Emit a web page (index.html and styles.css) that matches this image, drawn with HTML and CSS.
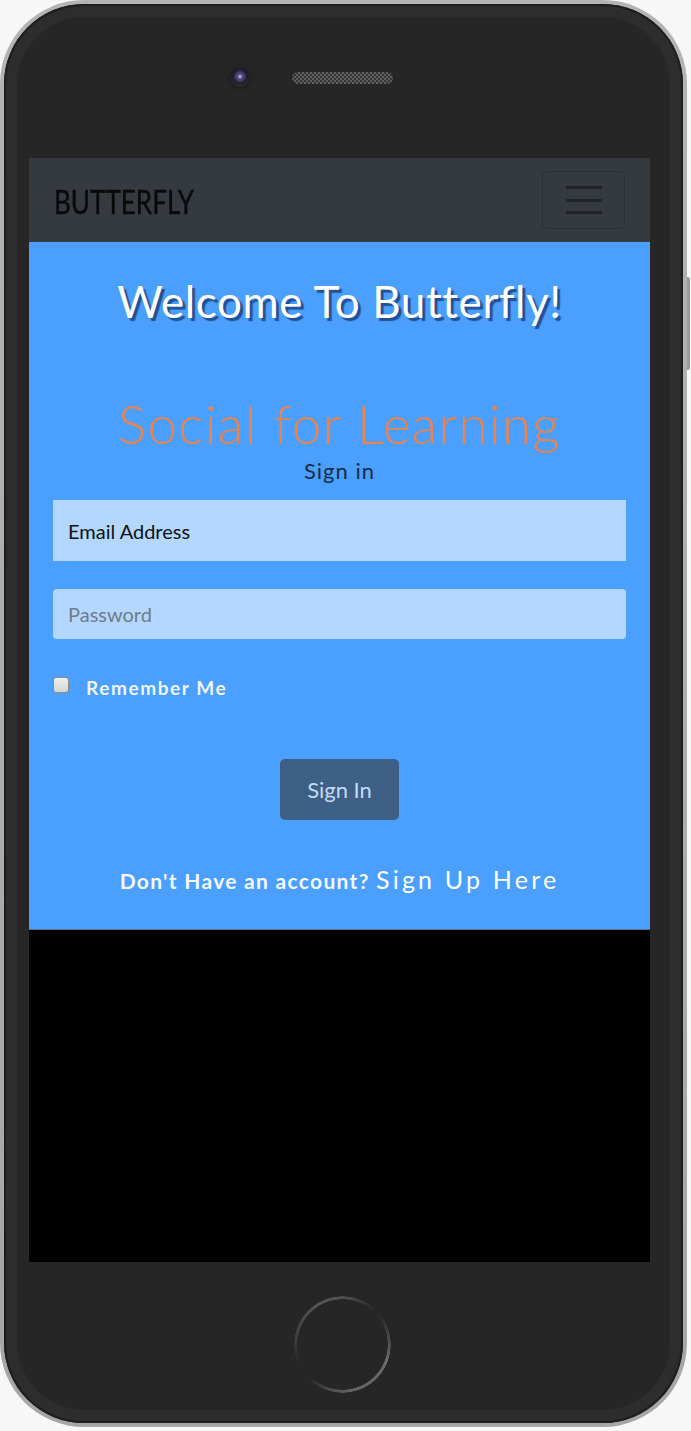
FILE: index.html
```html
<!DOCTYPE html>
<html lang="en">
<head>
<meta charset="utf-8">
<title>Butterfly</title>
<link rel="stylesheet" href="styles.css">
</head>
<body>
<div class="phone">
  <span class="side-btn"></span>
  <div class="shell">
    <div class="face">
      <div class="top">
        <span class="camera"></span>
        <span class="speaker"></span>
      </div>
      <div class="screen">
        <nav class="navbar">
          <span class="brand">BUTTERFLY</span>
          <button class="toggler" type="button" aria-label="menu">
            <span class="bar"></span><span class="bar"></span><span class="bar"></span>
          </button>
        </nav>
        <main class="main">
          <h1 class="welcome">Welcome To Butterfly!</h1>
          <h2 class="tagline">Social for Learning</h2>
          <p class="signin-title">Sign in</p>
          <form class="form">
            <input class="input input-email" type="text" value="Email Address">
            <input class="input input-pass" type="password" placeholder="Password">
            <label class="remember"><span class="check"></span><span>Remember Me</span></label>
            <div class="btn-row"><button class="btn" type="button">Sign In</button></div>
            <p class="signup">Don't Have an account? <a class="signup-link">Sign Up Here</a></p>
          </form>
        </main>
        <div class="blank"></div>
      </div>
      <div class="bottom">
        <span class="home"></span>
      </div>
    </div>
  </div>
</div>
</body>
</html>
```
FILE: styles.css
```css
html, body {
  margin: 0;
  padding: 0;
}
body {
  background: #f7f7f7;
  width: 691px;
  height: 1431px;
  overflow: hidden;
  font-family: Lato, "Open Sans", sans-serif;
}
.phone {
  position: relative;
  width: 687px;
  height: 1427px;
  box-sizing: border-box;
  padding: 4px;
  border-radius: 84px;
  background: linear-gradient(180deg, #b4b4b4, #a6a6a6);
}
.side-btn {
  position: absolute;
  left: 687px;
  top: 277px;
  width: 3px;
  height: 93px;
  background: #9c9c9c;
  border-radius: 0 2px 2px 0;
}
.shell {
  height: 100%;
  box-sizing: border-box;
  padding: 13px;
  border-radius: 80px;
  background: #2d2d2d;
  box-shadow: inset 0 0 0 2px #1e1e1e;
}
.face {
  height: 100%;
  box-sizing: border-box;
  padding: 0 20px 0 12px;
  border-radius: 68px;
  background: #262626;
  display: flex;
  flex-direction: column;
}
.top {
  height: 141px;
  flex: none;
  box-sizing: border-box;
  padding: 0 0 19px 202px;
  display: flex;
  align-items: center;
  gap: 43px;
}
.camera {
  width: 18px;
  height: 18px;
  border-radius: 50%;
  background: radial-gradient(circle at 50% 42%, #b0a8d8 0 1px, #5e5590 2px, #3a3458 5px, #1c1b26 7px, #2a2a2e 9px);
  box-shadow: 0 0 3px 2px #1f1f1f;
}
.speaker {
  width: 101px;
  height: 12px;
  border-radius: 6px;
  background-color: #3a3a3a;
  background-image: repeating-conic-gradient(#5e5e5e 0 25%, #353535 0 50%);
  background-size: 4px 4px;
}
.screen {
  flex: none;
  height: 1104px;
  display: flex;
  flex-direction: column;
  background: #000;
}
.navbar {
  flex: none;
  height: 84px;
  box-sizing: border-box;
  padding: 0 25px;
  background: #343a40;
  display: flex;
  align-items: center;
  justify-content: space-between;
}
.brand {
  display: inline-block;
  font-family: Lato, "Open Sans", sans-serif;
  font-size: 33px;
  line-height: 40px;
  color: #0a0a0a;
  transform: scaleX(0.79);
  transform-origin: left center;
  margin-top: 2px;
  -webkit-text-stroke: 0.4px #0a0a0a;
}
.toggler {
  width: 83px;
  height: 58px;
  box-sizing: border-box;
  border: 1px solid rgba(0, 0, 0, 0.16);
  border-radius: 5px;
  background: transparent;
  padding: 0;
  display: flex;
  flex-direction: column;
  align-items: center;
  justify-content: center;
  gap: 9.5px;
}
.bar {
  display: block;
  width: 36px;
  height: 3px;
  background: #1f2327;
  border-radius: 1px;
}
.main {
  flex: none;
  height: 688px;
  box-sizing: border-box;
  padding: 34px 24px 0;
  background: #4a9fff;
  border-bottom: 1px solid #5c7088;
  text-align: center;
}
.welcome {
  margin: 0;
  font-size: 44px;
  line-height: 50px;
  font-weight: 400;
  letter-spacing: 0.6px;
  color: #fff;
  text-shadow: 3px 3px 1px rgba(25, 60, 120, 0.8);
}
.tagline {
  margin: 68px 0 0;
  font-size: 53px;
  line-height: 60px;
  font-weight: 300;
  letter-spacing: 1.3px;
  color: #ea834c;
}
.signin-title {
  margin: 4px 0 0;
  font-size: 22px;
  line-height: 26px;
  letter-spacing: 1px;
  color: #1b2c45;
}
.form {
  margin-top: 16px;
  display: flex;
  flex-direction: column;
  text-align: left;
}
.input {
  display: block;
  width: 100%;
  box-sizing: border-box;
  border: none;
  outline: none;
  background: #b3d7ff;
  font-family: Lato, "Open Sans", sans-serif;
  font-size: 20px;
  padding: 0 15px;
  color: #111;
}
.input-email {
  height: 61px;
  border-radius: 0;
}
.input-pass {
  height: 50px;
  margin-top: 28px;
  border-radius: 4px;
}
.input-pass::placeholder {
  color: #6f7c8a;
}
.remember {
  margin-top: 37px;
  display: flex;
  align-items: center;
  gap: 17px;
  font-size: 19px;
  font-weight: 700;
  letter-spacing: 1.6px;
  color: #eef6ff;
}
.check {
  width: 16px;
  height: 16px;
  box-sizing: border-box;
  border: 1px solid #8c8c8c;
  border-radius: 3px;
  background: linear-gradient(180deg, #f0f0f0, #d4d4d4);
  margin-top: -5px;
}
.btn-row {
  margin-top: 60px;
  display: flex;
  justify-content: center;
}
.btn {
  width: 119px;
  height: 61px;
  border: none;
  border-radius: 5px;
  background: #3e5f86;
  color: #c5dbf4;
  font-family: Lato, "Open Sans", sans-serif;
  font-size: 22px;
}
.signup {
  margin: 44px 0 0;
  text-align: center;
  font-size: 21px;
  font-weight: 700;
  letter-spacing: 1.3px;
  color: #f5f9ff;
}
.signup-link {
  font-size: 25px;
  font-weight: 400;
  letter-spacing: 3.2px;
  color: #fff;
}
.blank {
  flex: 1;
  background: #000;
}
.bottom {
  flex: 1;
  box-sizing: border-box;
  padding: 34px 0 0 265px;
}
.home {
  display: block;
  width: 97px;
  height: 97px;
  border-radius: 50%;
  background: conic-gradient(#505050 0deg, #3a3a3a 25deg, rgba(60,60,60,0) 45deg, rgba(90,90,90,0.2) 60deg, #6a6a6a 110deg, #646464 170deg, #4e4e4e 195deg, rgba(60,60,60,0) 225deg, rgba(60,60,60,0) 245deg, #3c3c3c 275deg, #555 330deg, #505050 360deg);
  -webkit-mask: radial-gradient(circle, transparent 45px, #000 45.5px, #000 48px, transparent 48.5px);
  mask: radial-gradient(circle, transparent 45px, #000 45.5px, #000 48px, transparent 48.5px);
}
```
